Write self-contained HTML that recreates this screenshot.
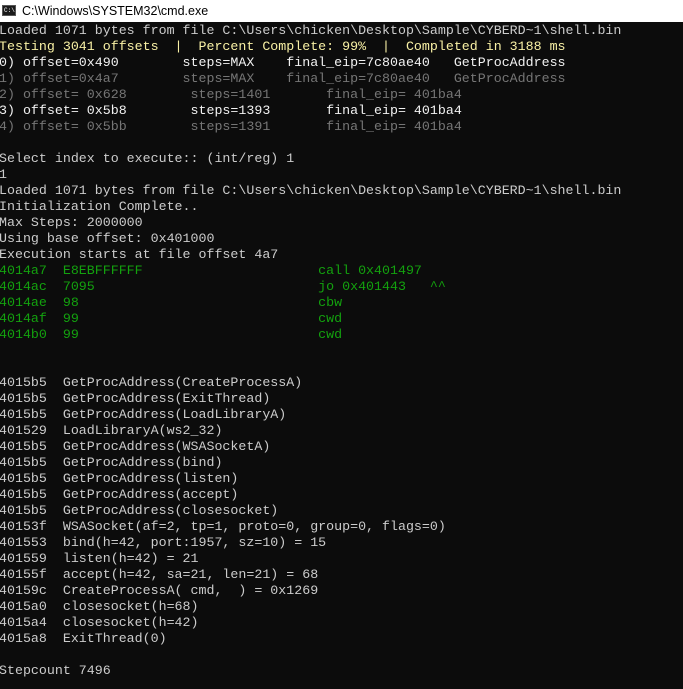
<!DOCTYPE html>
<html><head><meta charset="utf-8"><style>
html,body{margin:0;padding:0;width:683px;height:689px;overflow:hidden;background:#0c0c0c}
.title{position:absolute;left:0;top:0;width:683px;height:22px;background:#fff;font-family:"Liberation Sans",sans-serif;font-size:12.5px;color:#000;line-height:22px}
.title .ic{position:absolute;left:2px;top:5px;width:14px;height:11px;background:#1a1a1a;border:1px solid #555;box-sizing:border-box}
.title .ic span{position:absolute;left:1px;top:1px;font-size:6px;line-height:7px;color:#fff;font-family:"Liberation Mono",monospace}
.title .t{position:absolute;left:22px;top:0}
pre{position:absolute;left:-1px;top:23px;margin:0;font-family:"Liberation Mono",monospace;font-size:13.3px;line-height:16px;color:#cccccc}
.y{color:#f9f1a5}.w{color:#f2f2f2}.g{color:#767676}.gr{color:#13a10e}
</style></head><body>
<div class="title"><div class="ic"><span>C:\</span></div><div class="t">C:\Windows\SYSTEM32\cmd.exe</div></div>
<pre>Loaded 1071 bytes from file C:\Users\chicken\Desktop\Sample\CYBERD~1\shell.bin
<span class="y">Testing 3041 offsets  |  Percent Complete: 99%  |  Completed in 3188 ms</span>
<span class="w">0) offset=0x490        steps=MAX    final_eip=7c80ae40   GetProcAddress</span>
<span class="g">1) offset=0x4a7        steps=MAX    final_eip=7c80ae40   GetProcAddress</span>
<span class="g">2) offset= 0x628        steps=1401       final_eip= 401ba4</span>
<span class="w">3) offset= 0x5b8        steps=1393       final_eip= 401ba4</span>
<span class="g">4) offset= 0x5bb        steps=1391       final_eip= 401ba4</span>

Select index to execute:: (int/reg) 1
1
Loaded 1071 bytes from file C:\Users\chicken\Desktop\Sample\CYBERD~1\shell.bin
Initialization Complete..
Max Steps: 2000000
Using base offset: 0x401000
Execution starts at file offset 4a7
<span class="gr">4014a7  E8EBFFFFFF                      call 0x401497
4014ac  7095                            jo 0x401443   ^^
4014ae  98                              cbw
4014af  99                              cwd
4014b0  99                              cwd</span>


4015b5  GetProcAddress(CreateProcessA)
4015b5  GetProcAddress(ExitThread)
4015b5  GetProcAddress(LoadLibraryA)
401529  LoadLibraryA(ws2_32)
4015b5  GetProcAddress(WSASocketA)
4015b5  GetProcAddress(bind)
4015b5  GetProcAddress(listen)
4015b5  GetProcAddress(accept)
4015b5  GetProcAddress(closesocket)
40153f  WSASocket(af=2, tp=1, proto=0, group=0, flags=0)
401553  bind(h=42, port:1957, sz=10) = 15
401559  listen(h=42) = 21
40155f  accept(h=42, sa=21, len=21) = 68
40159c  CreateProcessA( cmd,  ) = 0x1269
4015a0  closesocket(h=68)
4015a4  closesocket(h=42)
4015a8  ExitThread(0)

Stepcount 7496</pre>
</body></html>
